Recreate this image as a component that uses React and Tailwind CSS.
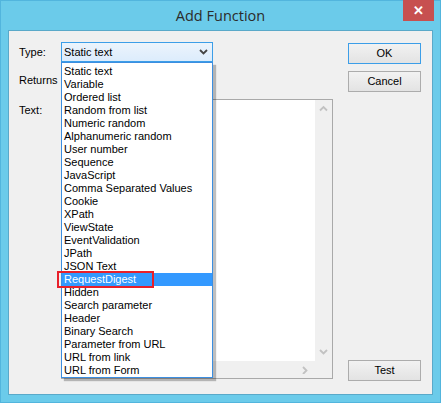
const ITEMS = [
  "Static text",
  "Variable",
  "Ordered list",
  "Random from list",
  "Numeric random",
  "Alphanumeric random",
  "User number",
  "Sequence",
  "JavaScript",
  "Comma Separated Values",
  "Cookie",
  "XPath",
  "ViewState",
  "EventValidation",
  "JPath",
  "JSON Text",
  "RequestDigest",
  "Hidden",
  "Search parameter",
  "Header",
  "Binary Search",
  "Parameter from URL",
  "URL from link",
  "URL from Form",
];

const Chevron = ({ dir = "down", className = "" }) => {
  const paths = {
    down: "M1 2 L4.5 5.5 L8 2",
    up: "M1 5.5 L4.5 2 L8 5.5",
    right: "M2 1 L5.5 4.5 L2 8",
  };
  return (
    <svg width="9" height="8" viewBox="0 0 9 8" className={className}>
      <path d={paths[dir]} fill="none" stroke="currentColor" strokeWidth="1.8" />
    </svg>
  );
};

const Button = ({ children, focused }) => (
  <button
    className={`w-[73px] h-[21px] flex items-center justify-center text-[11px] text-black bg-gradient-to-b from-[#f2f2f2] to-[#e3e3e3] border ${
      focused ? "border-[#3c9ee8]" : "border-[#acacac]"
    }`}
  >
    {children}
  </button>
);

export default function App() {
  return (
    <div
      className="w-[441px] h-[403px] bg-[#6bcbea] border border-[#52b5dd] flex flex-col"
      style={{ fontFamily: '"Liberation Sans", Arial, sans-serif' }}
    >
      {/* title bar */}
      <div className="h-[29px] relative flex items-center justify-center">
        <span className="text-[14.5px] text-[#2b2b2b]" style={{ fontFamily: '"Open Sans", "Noto Sans", sans-serif' }}>
          Add Function
        </span>
        <div className="absolute right-[6px] top-[-1px] w-[31px] h-[21px] bg-[#c75050] flex items-center justify-center text-white text-[13px] font-bold">
          ✕
        </div>
      </div>

      {/* client area */}
      <div className="mx-[7px] h-[365px] bg-[#f0f0f0] border border-[#5aa9c9] flex text-[11px] text-black">
        <div className="w-[324px] pl-[10px] pt-[11px] flex flex-col">
          {/* type row */}
          <div className="flex items-center h-[20px]">
            <span className="w-[42px]">Type:</span>
            <div className="relative">
              <div className="w-[152px] h-[20px] border border-[#3c9ee8] bg-gradient-to-b from-[#ecf4fc] to-[#dcecfc] flex items-center justify-between pl-[2px] pr-[4px]">
                <span>Static text</span>
                <Chevron className="text-[#444]" />
              </div>
              {/* dropdown list */}
              <div className="absolute left-0 top-[20px] w-[152px] h-[316px] bg-white border border-[#3c8ee0] pt-[2px] shadow-[3px_3px_1px_rgba(0,0,0,0.25)] z-10">
                {ITEMS.map((item) => (
                  <div
                    key={item}
                    className={`h-[13px] leading-[13px] pl-[2px] ${
                      item === "RequestDigest" ? "bg-[#3399ff] text-white relative" : ""
                    }`}
                  >
                    {item}
                    {item === "RequestDigest" && (
                      <div className="absolute left-[-5px] top-[-2px] w-[97px] h-[17px] border-2 border-[#e8202a]" />
                    )}
                  </div>
                ))}
              </div>
            </div>
          </div>

          {/* returns row */}
          <div className="mt-[11px] h-[14px] flex items-center">
            <span className="w-[41px] overflow-hidden whitespace-nowrap">Returns list</span>
          </div>

          {/* text row */}
          <div className="mt-[12px] flex">
            <span className="w-[42px] mt-[3px]">Text:</span>
            <div className="w-[272px] h-[280px] bg-white border border-[#a9a9a9] flex flex-col">
              <div className="flex-1 flex">
                <div className="flex-1" />
                <div className="w-[17px] bg-[#f0f0f0] flex flex-col items-center justify-between py-[5px] text-[#c2c2c2]">
                  <Chevron dir="up" />
                  <Chevron dir="down" />
                </div>
              </div>
              <div className="h-[17px] bg-[#f0f0f0] flex justify-end items-center pr-[22px] text-[#c2c2c2]">
                <Chevron dir="right" />
              </div>
            </div>
          </div>
        </div>

        {/* buttons */}
        <div className="flex-1 pl-[15px] pt-[12px] pb-[13px] flex flex-col">
          <Button focused>OK</Button>
          <div className="mt-[7px]">
            <Button>Cancel</Button>
          </div>
          <div className="mt-auto">
            <Button>Test</Button>
          </div>
        </div>
      </div>
    </div>
  );
}
